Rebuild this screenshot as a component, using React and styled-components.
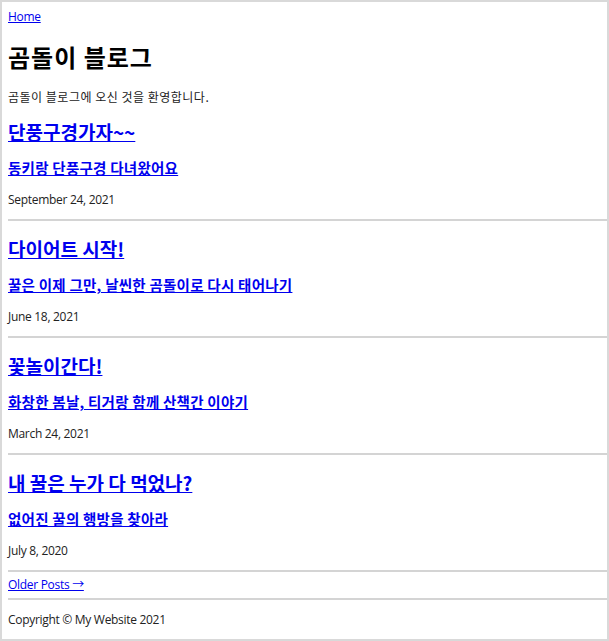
import React from 'react'
import styled, { createGlobalStyle } from 'styled-components'

const GlobalStyle = createGlobalStyle`
  html, body {
    margin: 0;
    padding: 0;
    background: #ffffff;
  }
  body {
    font-family: "Open Sans", "Noto Sans CJK KR", sans-serif;
    color: #222222;
  }
`

const Frame = styled.div`
  box-sizing: border-box;
  width: 609px;
  height: 641px;
  border: 2px solid #d9d9d9;
  padding: 7px 0 0 6px;
  display: flex;
  flex-direction: column;
  overflow: hidden;
`

const Link = styled.a`
  color: #0000ee;
  text-decoration: underline;
`

const NavLink = styled(Link)`
  display: block;
  font-size: 12px;
  letter-spacing: -0.3px;
  line-height: 16px;
  align-self: flex-start;
`

const Korean = `
  font-family: "Noto Sans CJK KR", sans-serif;
`

const Title = styled.h1`
  ${Korean}
  margin: 16px 0 0;
  font-size: 24px;
  letter-spacing: 1px;
  line-height: 32px;
  font-weight: 700;
  color: #000;
`

const Intro = styled.p`
  ${Korean}
  margin: 15px 0 0;
  font-size: 12px;
  letter-spacing: 0.5px;
  line-height: 18px;
  color: #222;
`

const PostList = styled.div`
  display: flex;
  flex-direction: column;
`

const Post = styled.article`
  display: flex;
  flex-direction: column;
  padding-top: ${(p) => (p.$first ? '13px' : '15px')};
`

const PostTitle = styled.h2`
  ${Korean}
  margin: 0;
  font-size: 19px;
  line-height: 26px;
  font-weight: 700;
`

const PostSubtitle = styled.h3`
  ${Korean}
  margin: 13px 0 0;
  font-size: 14.5px;
  letter-spacing: 0.25px;
  line-height: 20px;
  font-weight: 700;
`

const PostDate = styled.p`
  margin: 13px 0 0;
  font-size: 12px;
  letter-spacing: -0.3px;
  line-height: 18px;
  color: #222;
`

const Rule = styled.hr`
  margin: ${(p) => p.$top || 10}px 0 0;
  border: 0;
  border-top: 2px solid #d4d4d4;
  width: 100%;
`

const Pager = styled(Link)`
  display: block;
  margin-top: 5px;
  font-size: 12px;
  letter-spacing: -0.3px;
  line-height: 16px;
  align-self: flex-start;
`

const Footer = styled.footer`
  margin-top: 11px;
  font-size: 12px;
  letter-spacing: -0.3px;
  line-height: 18px;
  color: #222;
`

const posts = [
  { title: '단풍구경가자~~', subtitle: '동키랑 단풍구경 다녀왔어요', date: 'September 24, 2021' },
  { title: '다이어트 시작!', subtitle: '꿀은 이제 그만, 날씬한 곰돌이로 다시 태어나기', date: 'June 18, 2021' },
  { title: '꽃놀이간다!', subtitle: '화창한 봄날, 티거랑 함께 산책간 이야기', date: 'March 24, 2021' },
  { title: '내 꿀은 누가 다 먹었나?', subtitle: '없어진 꿀의 행방을 찾아라', date: 'July 8, 2020' },
]

export default function App() {
  return (
    <>
      <GlobalStyle />
      <Frame>
        <NavLink href="#">Home</NavLink>
        <Title>곰돌이 블로그</Title>
        <Intro>곰돌이 블로그에 오신 것을 환영합니다.</Intro>
        <PostList>
          {posts.map((post, i) => (
            <Post key={post.title} $first={i === 0}>
              <PostTitle>
                <Link href="#">{post.title}</Link>
              </PostTitle>
              <PostSubtitle>
                <Link href="#">{post.subtitle}</Link>
              </PostSubtitle>
              <PostDate>{post.date}</PostDate>
              <Rule />
            </Post>
          ))}
        </PostList>
        <Pager href="#">Older Posts →</Pager>
        <Rule $top={5} />
        <Footer>Copyright © My Website 2021</Footer>
      </Frame>
    </>
  )
}
